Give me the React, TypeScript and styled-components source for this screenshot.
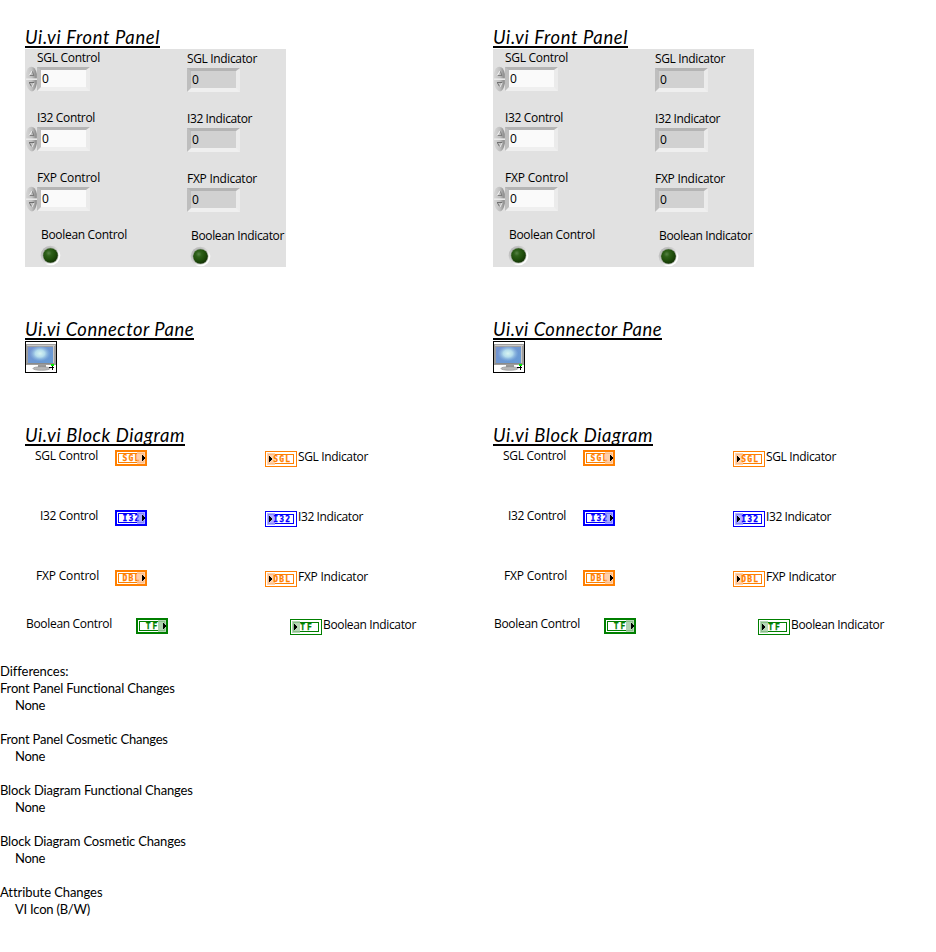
import React, { useLayoutEffect, useRef, useState } from "react";
import styled, { createGlobalStyle } from "styled-components";

const GlobalStyle = createGlobalStyle`
  body { margin: 0; background: #fff; color: #000; }
  * { box-sizing: border-box; }
`;

const Page = styled.main`
  width: 936px;
  height: 952px;
  overflow: hidden;
`;

const Versions = styled.div`
  display: grid;
  grid-template-columns: 468px 468px;
  height: 663px;
`;

const Version = styled.section`
  padding: 27px 0 0 25px;
`;

const Heading = styled.h2<{ $width: number }>`
  width: ${(p) => p.$width}px;
  height: 21px;
  margin: 0;
  border-bottom: 2px solid #000;
  font: italic 400 18.4px/20px Lato, sans-serif;
  white-space: nowrap;
`;

const Panel = styled.div`
  width: 261px;
  height: 218px;
  margin: 1px 0 52px;
  background: #e1e1e1;
  display: grid;
  grid-template-columns: 162px 99px;
  grid-template-rows: 60px 60px 57px 41px;
`;

const Text = styled.span`
  display: inline-block;
  white-space: nowrap;
`;

const Label = styled.div<{ $indent?: number }>`
  height: 18px;
  padding-left: ${(p) => p.$indent ?? 0}px;
  font: 400 12px/18px "Open Sans", "Noto Sans", sans-serif;
`;

const Cell = styled.div<{ $lower?: boolean }>`
  padding-top: ${(p) => (p.$lower ? 1 : 0)}px;
`;

const NumberRow = styled.div`
  display: flex;
`;

const Field = styled.div<{ $readOnly?: boolean }>`
  width: 53px;
  height: 24px;
  border: 4px solid;
  border-top-width: 3px;
  border-color: #b4b4b4 #ebebeb #efefef #bebebe;
  background: ${(p) => (p.$readOnly ? "#d1d1d1" : "#fafafa")};
  padding-left: 1px;
  font: 400 12px/18px "Open Sans", "Noto Sans", sans-serif;
`;

const SpinnerIcon = styled.svg`
  display: block;
  width: 12px;
  height: 26px;
  margin-top: -1px;
`;

const LedIcon = styled.svg<{ $indent: number }>`
  display: block;
  margin-top: 1px;
  margin-left: ${(p) => p.$indent}px;
`;

const Pane = styled.div`
  height: 32px;
  margin: 1px 0 52px;
`;

const Block = styled.svg`
  display: block;
`;

const Diagram = styled.div`
  display: grid;
  grid-template-columns: 240px 200px;
  grid-template-rows: 60px 60px 48px 30px;
  padding-top: 4px;
`;

const Node = styled.div<{ $indent: number; $lower?: boolean }>`
  display: flex;
  padding-left: ${(p) => p.$indent}px;
  padding-top: ${(p) => (p.$lower ? 1 : 0)}px;
`;

const NodeLabel = styled.div<{ $width?: number; $gap?: number }>`
  width: ${(p) => (p.$width ? p.$width + "px" : "auto")};
  margin-left: ${(p) => p.$gap ?? 0}px;
  margin-top: -3px;
  font: 400 12px/18px "Open Sans", "Noto Sans", sans-serif;
`;

const Report = styled.section`
  font: 400 13px/17px Lato, sans-serif;
`;

const Line = styled.div<{ $nested?: boolean }>`
  height: 17px;
  padding-left: ${(p) => (p.$nested ? 15 : 0)}px;
`;

const Group = styled.div`
  margin-bottom: 17px;
`;

/** Tracks its text so that it fills the given width. */
function Fit({ text, width }: { text: string; width: number }) {
  const ref = useRef<HTMLSpanElement>(null);
  const [spacing, setSpacing] = useState(0);
  useLayoutEffect(() => {
    const natural = ref.current!.getBoundingClientRect().width;
    setSpacing((width - natural) / text.length);
  }, [text, width]);
  return (
    <Text ref={ref} style={{ letterSpacing: spacing }}>
      {text}
    </Text>
  );
}

function Spinner() {
  return (
    <SpinnerIcon viewBox="0 0 12 26">
      <defs>
        <linearGradient id="metal" x1="0" x2="1">
          <stop offset="0" stopColor="#d6d6d6" />
          <stop offset="0.55" stopColor="#c0c0c0" />
          <stop offset="1" stopColor="#858585" />
        </linearGradient>
      </defs>
      <path d="M1 12.500V8Q2 .8 6.300 .8Q10.600 .8 11.800 8V12.500Z" fill="url(#metal)" />
      <path d="M1 14H11.800V17.500Q10.500 25 7 25.400Q3 25 1 17.500Z" fill="url(#metal)" />
      <path d="M7.200 5L9 9.500H4.500" fill="none" stroke="#777" strokeWidth=".9" />
      <path d="M4.200 9.500L7 5" fill="none" stroke="#f8f8f8" strokeWidth=".9" />
      <path d="M4 16.500H9M4.500 17L6.500 20.500" fill="none" stroke="#666" strokeWidth=".9" />
      <path d="M9 17L7 21" fill="none" stroke="#eee" strokeWidth=".9" />
      <path d="M1 13.200H12" stroke="#ededed" />
    </SpinnerIcon>
  );
}

function Led({ indent }: { indent: number }) {
  return (
    <LedIcon $indent={indent} width="22" height="21" viewBox="0 0 22 21">
      <defs>
        <linearGradient id="rim" x1=".1" y1=".1" x2=".9" y2=".9">
          <stop offset="0" stopColor="#b4b4b4" />
          <stop offset=".5" stopColor="#dadada" />
          <stop offset=".75" stopColor="#fbfbfb" />
          <stop offset="1" stopColor="#fff" />
        </linearGradient>
        <radialGradient id="lens" cx=".38" cy=".34" r=".65">
          <stop offset="0" stopColor="#568245" />
          <stop offset=".3" stopColor="#2e6019" />
          <stop offset=".7" stopColor="#1f4d0b" />
          <stop offset="1" stopColor="#153606" />
        </radialGradient>
      </defs>
      <circle cx="10.500" cy="10.500" r="9.800" fill="url(#rim)" />
      <circle cx="10.500" cy="10.500" r="8" fill="#8b9585" opacity=".6" />
      <circle cx="10.500" cy="10.500" r="7.300" fill="url(#lens)" />
    </LedIcon>
  );
}

function Terminal({ type, color, tint, indicator }: { type: string; color: string; tint: string; indicator?: boolean }) {
  const edge = indicator ? 1 : 2;
  const wide = type.length === 3;
  const textX = indicator ? (wide ? 8.3 : 10.3) : wide ? 7.5 : 9.8;
  const arrowX = indicator ? 4 : 27;
  return (
    <Block width="32" height="16" viewBox="0 0 32 16">
      <g shapeRendering="crispEdges">
        <rect width="32" height="16" fill={color} />
        <rect x={edge} y={edge} width={32 - 2 * edge} height={16 - 2 * edge} fill="#fff" />
        <rect x="3" y="3" width="26" height="10" fill={color} />
        <rect x="4" y="4" width="24" height="8" fill="#fff" />
      </g>
      <rect x={indicator ? 2 : 22} y="2" width="8" height="12" fill={tint} fillOpacity=".82" />
      <text
        x={textX}
        y="11"
        fill={color}
        stroke={color}
        strokeWidth=".25"
        fontFamily="DejaVu Sans Mono, monospace"
        fontWeight="700"
        fontSize="8"
        letterSpacing={wide ? 1.2 : 2}
      >
        {type}
      </text>
      {!indicator && <rect x="22" y="4" width="5" height="8" fill={tint} fillOpacity=".45" />}
      <path d={`M${arrowX} 5h1v1h1v1h1v2h-1v1h-1v1h-1z`} fill="#000" shapeRendering="crispEdges" />
    </Block>
  );
}

function MonitorIcon() {
  return (
    <Block width="32" height="32" viewBox="0 0 32 32">
      <defs>
        <linearGradient id="sky" x1="0" x2="1" y2="1">
          <stop offset="0" stopColor="#7793cf" />
          <stop offset="1" stopColor="#659cd6" />
        </linearGradient>
        <radialGradient id="glow">
          <stop offset="0" stopColor="#d9f5f2" />
          <stop offset=".45" stopColor="#b4dcec" />
          <stop offset="1" stopColor="#8cb8e2" stopOpacity="0" />
        </radialGradient>
      </defs>
      <rect x=".5" y=".5" width="31" height="31" fill="#fff" stroke="#000" />
      <g shapeRendering="crispEdges">
        <rect x="1" y="3" width="30" height="21" fill="#9e9e9e" />
        <rect x="2" y="4" width="28" height="1" fill="#c8c8c8" />
        <rect x="3" y="6" width="25" height="16" fill="url(#sky)" />
        <rect x="2" y="22" width="27" height="1" fill="#8a8a8a" />
        <rect x="28" y="5" width="1" height="17" fill="#c8c8c8" />
        <rect x="13" y="24" width="8" height="3" fill="#999" />
      </g>
      <ellipse cx="15" cy="12.500" rx="10.500" ry="8" fill="url(#glow)" />
      <ellipse cx="16.500" cy="27.500" rx="8.500" ry="1.800" fill="#b8b8b8" stroke="#888" strokeWidth=".6" />
      <g shapeRendering="crispEdges">
        <path d="M24 26h5v1h-5zM27 24h1v5h-1z" fill="#000" />
        <rect x="26" y="23" width="3" height="2" fill="#00f000" />
      </g>
    </Block>
  );
}

const numbers = [
  { name: "SGL", type: "SGL", control: 63, indicator: 70, indent: 10, color: "#ff8000", tint: "#ffc9a0" },
  { name: "I32", type: "I32", control: 58, indicator: 65, indent: 15, color: "#0000ff", tint: "#a0a0ff" },
  { name: "FXP", type: "DBL", control: 63, indicator: 70, indent: 11, color: "#ff8000", tint: "#ffc9a0" },
];

function FrontPanel() {
  return (
    <Panel>
      {numbers.map((n) => (
        <React.Fragment key={n.name}>
          <Cell>
            <Label $indent={12}>
              <Fit text={`${n.name} Control`} width={n.control} />
            </Label>
            <NumberRow>
              <Spinner />
              <Field>0</Field>
            </NumberRow>
          </Cell>
          <Cell $lower>
            <Label>
              <Fit text={`${n.name} Indicator`} width={n.indicator} />
            </Label>
            <Field $readOnly>0</Field>
          </Cell>
        </React.Fragment>
      ))}
      <Cell>
        <Label $indent={16}>
          <Fit text="Boolean Control" width={86} />
        </Label>
        <Led indent={15} />
      </Cell>
      <Cell $lower>
        <Label $indent={4}>
          <Fit text="Boolean Indicator" width={93} />
        </Label>
        <Led indent={3} />
      </Cell>
    </Panel>
  );
}

function BlockDiagram() {
  return (
    <Diagram>
      {numbers.map((n) => (
        <React.Fragment key={n.name}>
          <Node $indent={n.indent}>
            <NodeLabel $width={90 - n.indent}>
              <Fit text={`${n.name} Control`} width={n.control} />
            </NodeLabel>
            <Terminal type={n.type} color={n.color} tint={n.tint} />
          </Node>
          <Node $indent={0} $lower>
            <Terminal type={n.type} color={n.color} tint={n.tint} indicator />
            <NodeLabel $gap={1}>
              <Fit text={`${n.name} Indicator`} width={n.indicator} />
            </NodeLabel>
          </Node>
        </React.Fragment>
      ))}
      <Node $indent={1}>
        <NodeLabel $width={110}>
          <Fit text="Boolean Control" width={86} />
        </NodeLabel>
        <Terminal type="TF" color="#007f00" tint="#a6cda6" />
      </Node>
      <Node $indent={25} $lower>
        <Terminal type="TF" color="#007f00" tint="#a6cda6" indicator />
        <NodeLabel $gap={1}>
          <Fit text="Boolean Indicator" width={93} />
        </NodeLabel>
      </Node>
    </Diagram>
  );
}

const DiagramHeading = styled(Heading)`
  overflow: hidden;
`;

function ViVersion() {
  return (
    <Version>
      <Heading $width={135}>
        <Fit text="Ui.vi Front Panel" width={135} />
      </Heading>
      <FrontPanel />
      <Heading $width={169}>
        <Fit text="Ui.vi Connector Pane" width={169} />
      </Heading>
      <Pane>
        <MonitorIcon />
      </Pane>
      <DiagramHeading $width={160}>
        <Fit text="Ui.vi Block Diagram" width={160} />
      </DiagramHeading>
      <BlockDiagram />
    </Version>
  );
}

const changes = [
  { title: "Front Panel Functional Changes", width: 175, detail: "None", detailWidth: 30 },
  { title: "Front Panel Cosmetic Changes", width: 168, detail: "None", detailWidth: 30 },
  { title: "Block Diagram Functional Changes", width: 193, detail: "None", detailWidth: 30 },
  { title: "Block Diagram Cosmetic Changes", width: 186, detail: "None", detailWidth: 30 },
  { title: "Attribute Changes", width: 102, detail: "VI Icon (B/W)", detailWidth: 75 },
];

export default function App() {
  return (
    <Page>
      <GlobalStyle />
      <Versions>
        <ViVersion />
        <ViVersion />
      </Versions>
      <Report>
        <Line>
          <Fit text="Differences:" width={68} />
        </Line>
        {changes.map((c) => (
          <Group key={c.title}>
            <Line>
              <Fit text={c.title} width={c.width} />
            </Line>
            <Line $nested>
              <Fit text={c.detail} width={c.detailWidth} />
            </Line>
          </Group>
        ))}
      </Report>
    </Page>
  );
}
